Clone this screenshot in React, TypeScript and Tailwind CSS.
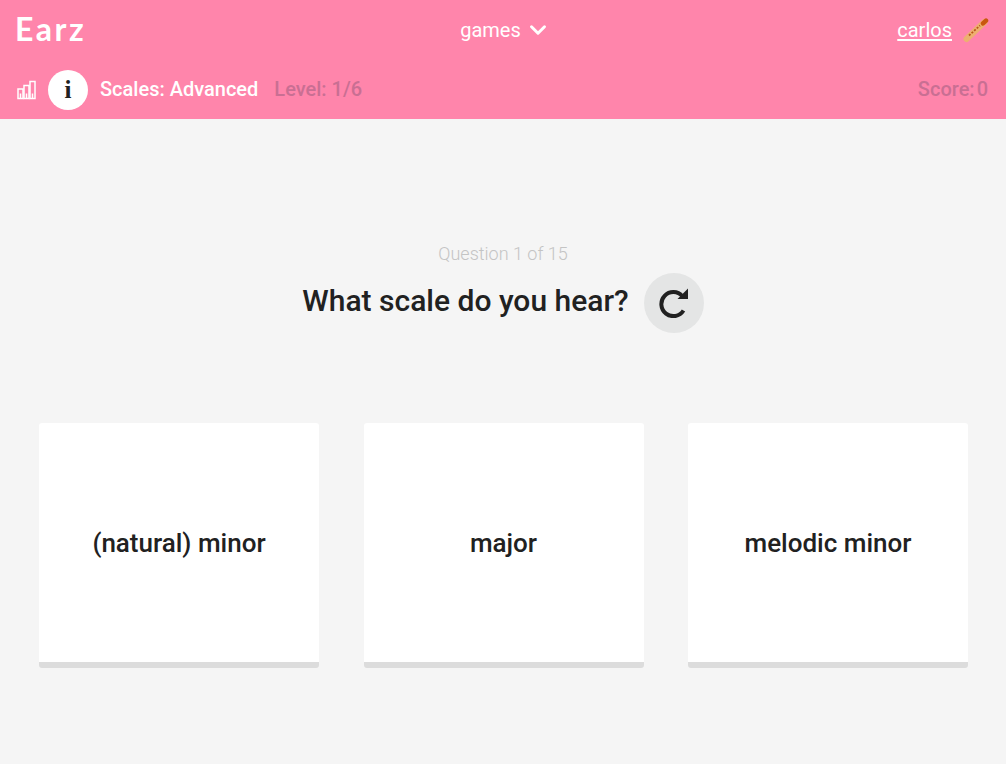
import { ChevronDown } from 'lucide-react';

const answers = ['(natural) minor', 'major', 'melodic minor'];

const BarsIcon = () => (
  <svg width="20" height="20" viewBox="0 0 20 20" fill="none" stroke="#fff" strokeWidth="1.5">
    <rect x="1" y="9" width="5" height="9.5" />
    <rect x="7" y="5.5" width="5" height="13" />
    <rect x="13" y="1.5" width="5" height="17" />
    <path d="M3.5 13.5v5M9.5 13.5v5M15.5 13.5v5" />
  </svg>
);

const FluteIcon = () => (
  <svg width="26" height="26" viewBox="0 0 26 26">
    <path d="M3.5 22 21.5 5" stroke="#edb06f" strokeWidth="6" strokeLinecap="round" />
    <path d="M20 6.4 23 3.6" stroke="#c9570f" strokeWidth="4.5" strokeLinecap="round" />
    <path d="M6 18.5 17 8.5" stroke="#b8561a" strokeWidth="1.8" strokeDasharray="2 1.5" />
  </svg>
);

const RefreshIcon = () => (
  <svg width="30" height="30" viewBox="0 0 30 30" fill="none">
    <path d="M23.4 8.2A12 12 0 1 0 24.5 22.5" stroke="#212121" strokeWidth="4" />
    <path d="M29 0.5V11H18.5z" fill="#212121" />
  </svg>
);

export default function App() {
  return (
    <div className="min-h-[764px] bg-[#f5f5f5] font-['Roboto',sans-serif] text-[#212121]">
      <header className="h-[119px] bg-[#ff85ab] text-white">
        <div className="grid h-[60px] grid-cols-3 items-center pl-[15px] pr-[17px]">
          <div className="mb-[3px] font-['Lato',sans-serif] text-[32px] leading-none font-bold tracking-[2.5px]">Earz</div>
          <button className="flex items-center justify-center gap-[4px] pl-[7px] text-xl">
            games
            <ChevronDown size={26} strokeWidth={2.75} />
          </button>
          <div className="flex items-center justify-end gap-[11px]">
            <a className="text-xl underline decoration-2 underline-offset-2">carlos</a>
            <FluteIcon />
          </div>
        </div>
        <div className="flex h-[59px] items-center pl-[17px] pr-[18px] text-xl font-medium">
          <BarsIcon />
          <div className="ml-[11px] flex h-10 w-10 items-center justify-center rounded-full bg-white font-['Liberation_Serif',serif] text-[25px] font-bold text-[#212121]">
            i
          </div>
          <span className="mb-[2px] ml-[12px]">Scales: Advanced</span>
          <span className="mb-[2px] ml-4 text-[#c96f93]">Level: 1/6</span>
          <span className="mb-[2px] ml-auto flex gap-[2px] text-[#c96f93]">
            <span>Score:</span>
            <span>0</span>
          </span>
        </div>
      </header>

      <main>
        <div className="pt-[121px] text-center text-lg font-light text-[#c4c4c4]">Question 1 of 15</div>
        <div className="mt-[5px] flex items-center justify-center gap-[15px]">
          <h1 className="mb-[5px] text-[30px] font-medium">What scale do you hear?</h1>
          <button className="flex h-[60px] w-[60px] items-center justify-center rounded-full bg-[#e4e5e5]">
            <RefreshIcon />
          </button>
        </div>
        <div className="mt-[90px] flex justify-between pl-[39px] pr-[38px]">
          {answers.map((answer) => (
            <button
              key={answer}
              className="flex h-[245px] w-[280px] items-center justify-center rounded-[3px] border-b-[6px] border-[#dcdcdc] bg-white pt-[2px] text-[26px] font-medium"
            >
              {answer}
            </button>
          ))}
        </div>
      </main>
    </div>
  );
}
